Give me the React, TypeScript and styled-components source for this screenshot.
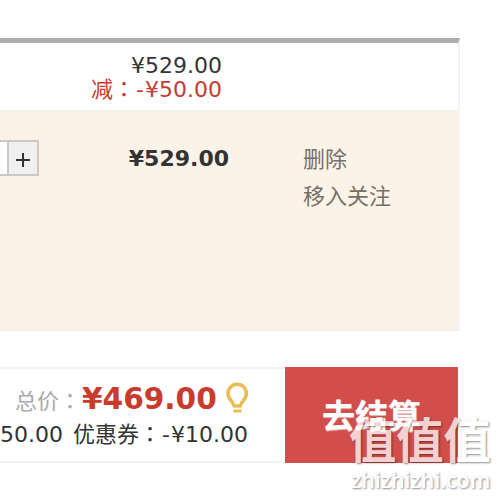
import styled, { createGlobalStyle, css } from "styled-components";

const GlobalStyle = createGlobalStyle`
  * {
    box-sizing: border-box;
  }

  body {
    margin: 0;
    background: #fff;
    font-family: "DejaVu Sans", "Noto Sans CJK SC", sans-serif;
    font-size: 22px;
    color: #333;
  }
`;

const Page = styled.main`
  position: relative;
  width: 500px;
  height: 498px;
  padding-top: 38px;
  overflow: hidden;
  white-space: nowrap;
`;

const Order = styled.section`
  width: 460px;
  height: 293px;
  border-top: 5px solid #adadad;
  border-right: 2px solid #f4f3f2;
  border-bottom: 2px solid #f1efed;
`;

const Promotion = styled.div`
  width: 100%;
  height: 68px;
  padding: 11px 236px 0 0;
  border-bottom: 1px solid #eee;
  text-align: right;
`;

const Line = styled.div<{ $red?: boolean }>`
  height: 24px;
  line-height: 24px;
  color: ${(props) => (props.$red ? "#c8392e" : "#333")};
`;

const Colon = styled.span`
  font-family: "Noto Sans CJK TC", sans-serif;
  line-height: 0;
`;

const Minus = styled.span`
  display: inline-block;
  width: 10px;
  text-align: center;
`;

const Product = styled.div`
  display: grid;
  grid-template-columns: 39px 190px 1fr;
  height: 218px;
  padding-top: 29px;
  background: #fcf3e8;
`;

const Stepper = styled.div`
  display: flex;
  height: 36px;
  border: 2px solid #cbc9c6;
  border-left: 0;
  background: #fff;
`;

const Quantity = styled.div`
  width: 7px;
`;

const Plus = styled.button`
  display: flex;
  align-items: center;
  justify-content: center;
  flex: 1;
  padding: 4px 0 0;
  border: 0;
  border-left: 2px solid #cbc9c6;
  background: #f0f0f0;
`;

const Subtotal = styled.strong`
  padding-top: 6px;
  line-height: 26px;
  text-align: right;
`;

const Actions = styled.div`
  padding: 0 0 0 74px;
`;

const Action = styled.a`
  display: block;
  height: 37px;
  line-height: 35px;
  font-family: "Noto Sans CJK SC", sans-serif;
  color: #757068;
`;

const Footer = styled.footer`
  display: flex;
  width: 458px;
  height: 96px;
  margin-top: 36px;
`;

const Summary = styled.div`
  width: 285px;
  border-top: 2px solid #f3f3f3;
  border-bottom: 2px solid #f3f3f3;
`;

const Total = styled.div`
  display: flex;
  align-items: center;
  height: 48px;
  padding: 12px 0 0 15px;
`;

const TotalLabel = styled.span`
  width: 67px;
  color: #aaa;
`;

const TotalPrice = styled.strong`
  width: 142px;
  font-size: 29.6px;
  line-height: 36px;
  color: #c93c2d;
`;

const Discounts = styled.div`
  display: flex;
  justify-content: space-between;
  width: 248px;
  height: 34px;
  line-height: 36px;
`;

const Checkout = styled.button`
  width: 173px;
  height: 96px;
  padding: 0 0 3px;
  border: 0;
  background: #d24e4a;
  color: #fff;
  font: bold 33px "Noto Sans CJK SC", sans-serif;
  text-shadow: 0 1px 1px rgba(255, 255, 255, 0.6);
`;

const Watermark = styled.div`
  position: absolute;
  top: 409px;
  left: 349px;
  color: #fff;
  opacity: 0.74;
`;

const shadow = css`
  text-shadow: 1px 1px 2px rgba(0, 0, 0, 0.6);
`;

const Brand = styled.div`
  font: bold 47.3px/58px "Noto Sans CJK SC", sans-serif;
  ${shadow}
`;

const Domain = styled.div`
  padding-left: 2px;
  font: 600 21.4px/26px "Open Sans", sans-serif;
  ${shadow}
`;

const Bulb = () => (
  <svg width="26" height="34" viewBox="0 0 26 34" fill="none" stroke="#e9bc55">
    <path
      d="M10 24c0-4-6-6.500-6-12.500a9.200 9.200 0 0 1 18.400 0c0 6-6 8.500-6 12.500z"
      strokeWidth="3.6"
      strokeLinejoin="round"
    />
    <path d="M9.500 29h8" strokeWidth="3" />
  </svg>
);

const App = () => {
  return (
    <Page>
      <GlobalStyle />
      <Order>
        <Promotion>
          <Line>¥529.00</Line>
          <Line $red>
            减<Colon>：</Colon>
            <Minus>-</Minus>¥50.00
          </Line>
        </Promotion>
        <Product>
          <Stepper>
            <Quantity />
            <Plus>
              <svg width="14" height="14" viewBox="0 0 14 14" stroke="#333">
                <path d="M7 0v14M0 7h14" strokeWidth="2" />
              </svg>
            </Plus>
          </Stepper>
          <Subtotal>¥529.00</Subtotal>
          <Actions>
            <Action>删除</Action>
            <Action>移入关注</Action>
          </Actions>
        </Product>
      </Order>
      <Footer>
        <Summary>
          <Total>
            <TotalLabel>
              总价<Colon>：</Colon>
            </TotalLabel>
            <TotalPrice>¥469.00</TotalPrice>
            <Bulb />
          </Total>
          <Discounts>
            <span>50.00</span>
            <span>
              优惠券<Colon>：</Colon>
              <Minus>-</Minus>¥10.00
            </span>
          </Discounts>
        </Summary>
        <Checkout>去结算</Checkout>
      </Footer>
      <Watermark>
        <Brand>值值值</Brand>
        <Domain>zhizhizhi.com</Domain>
      </Watermark>
    </Page>
  );
};

export default App;
